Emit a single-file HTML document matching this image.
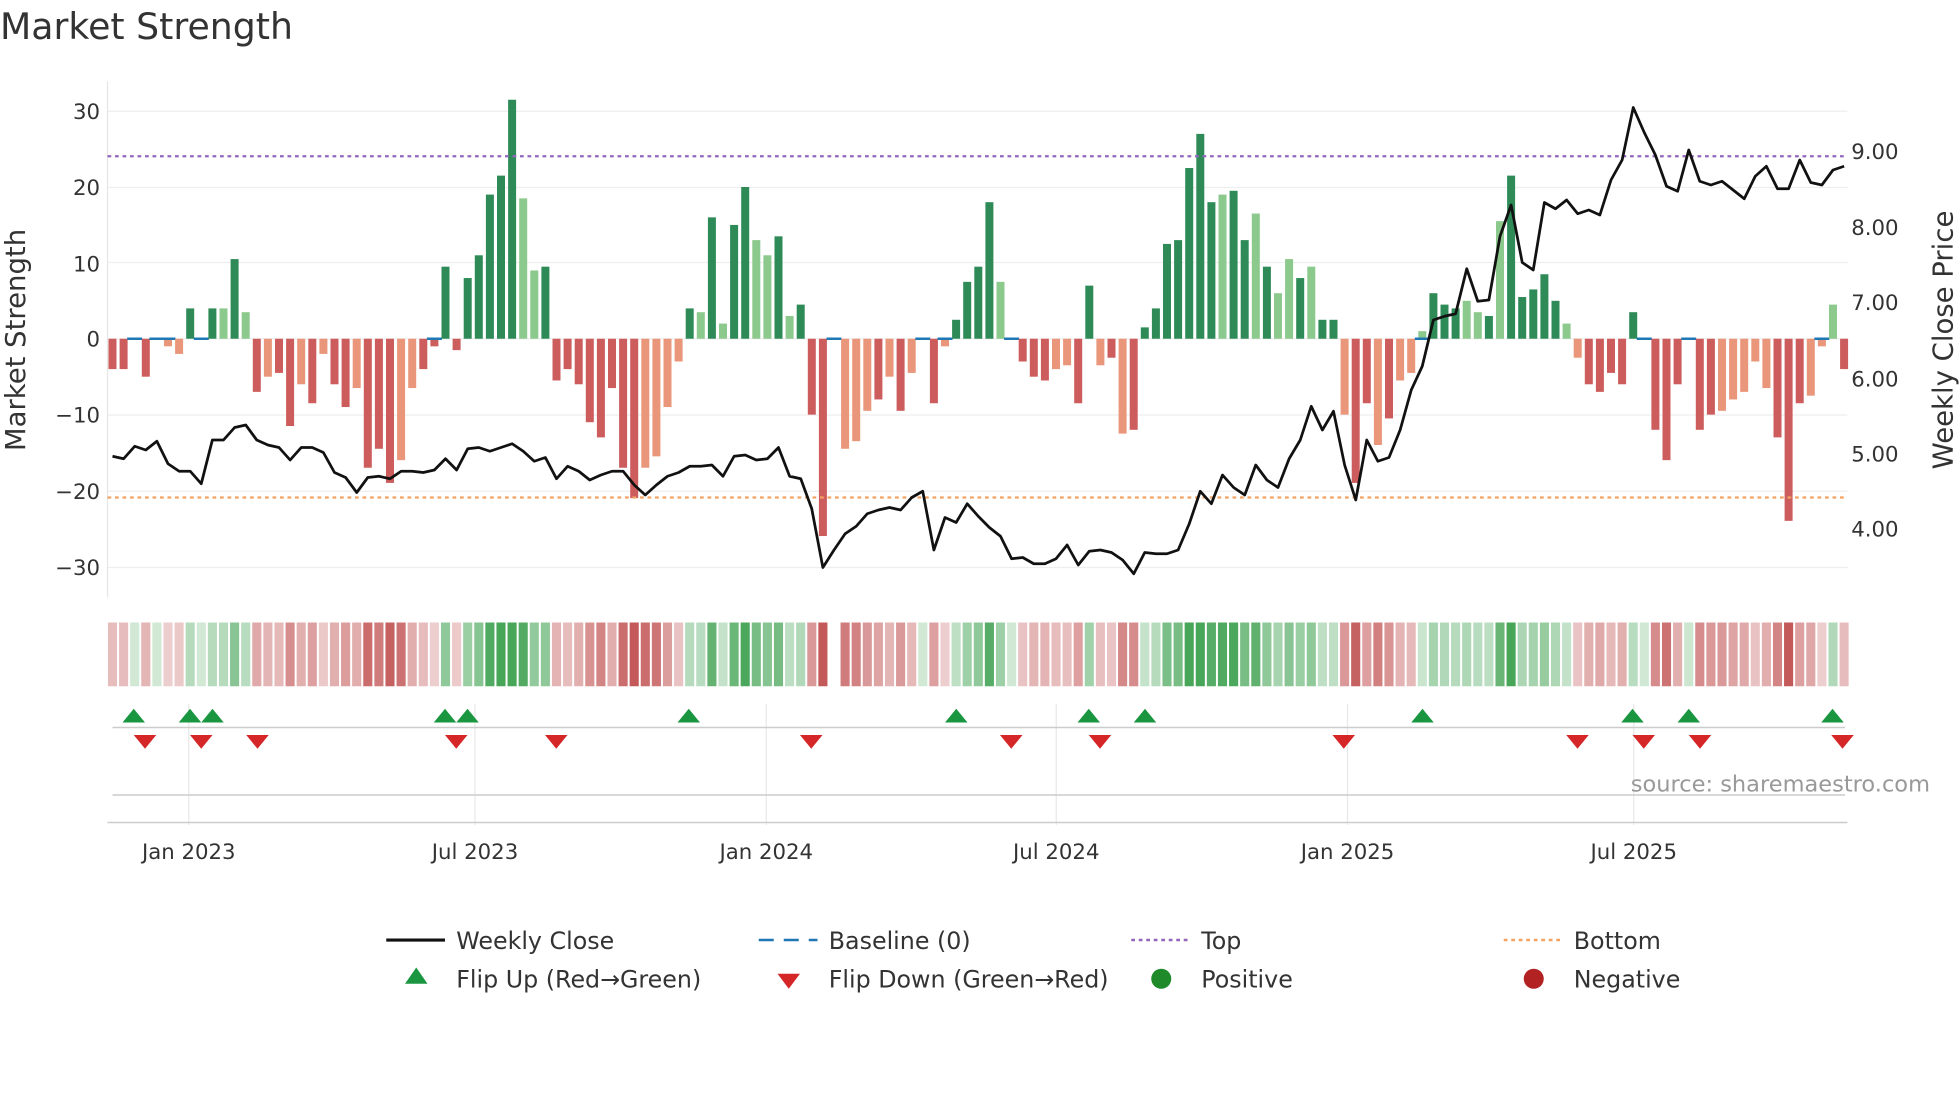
<!DOCTYPE html>
<html><head><meta charset="utf-8"><style>
html,body{margin:0;padding:0;background:#fff;}
svg{display:block;font-family:"DejaVu Sans","Liberation Sans",sans-serif;}
</style></head><body>
<svg id="c" width="1960" height="1102" viewBox="0 0 1568 881.6" xmlns="http://www.w3.org/2000/svg">
<rect width="1568" height="882" fill="#fff"/>
<text x="0" y="31" font-size="29" fill="#333">Market Strength</text>
<g id="grid"></g>
<g id="bars"></g>
<g id="strip"></g>
<g id="marks"></g>
<g id="lines"></g>
<g font-size="17" fill="#333">
<text x="80" y="95" text-anchor="end">30</text>
<text x="80" y="156" text-anchor="end">20</text>
<text x="80" y="217" text-anchor="end">10</text>
<text x="80" y="277" text-anchor="end">0</text>
<text x="80" y="338" text-anchor="end">−10</text>
<text x="80" y="399" text-anchor="end">−20</text>
<text x="80" y="460" text-anchor="end">−30</text>
<text x="1481" y="127">9.00</text>
<text x="1481" y="188">8.00</text>
<text x="1481" y="248">7.00</text>
<text x="1481" y="309">6.00</text>
<text x="1481" y="369">5.00</text>
<text x="1481" y="429">4.00</text>
<text x="151" y="687" text-anchor="middle">Jan 2023</text>
<text x="380" y="687" text-anchor="middle">Jul 2023</text>
<text x="613" y="687" text-anchor="middle">Jan 2024</text>
<text x="845" y="687" text-anchor="middle">Jul 2024</text>
<text x="1078" y="687" text-anchor="middle">Jan 2025</text>
<text x="1307" y="687" text-anchor="middle">Jul 2025</text>
</g>
<text transform="translate(20,272) rotate(-90)" font-size="22" fill="#333" text-anchor="middle">Market Strength</text>
<text transform="translate(1562,272) rotate(-90)" font-size="22" fill="#333" text-anchor="middle">Weekly Close Price</text>
<text x="1544" y="633" font-size="18" fill="#999" text-anchor="end">source: sharemaestro.com</text>
<g font-size="19" fill="#333">
<line x1="309" y1="752" x2="356" y2="752" stroke="#111" stroke-width="2.5"/>
<text x="365" y="759">Weekly Close</text>
<line x1="607" y1="752" x2="654" y2="752" stroke="#1f77b4" stroke-width="2" stroke-dasharray="12,8"/>
<text x="663" y="759">Baseline (0)</text>
<line x1="905" y1="752" x2="952" y2="752" stroke="#9467bd" stroke-width="2" stroke-dasharray="3,3"/>
<text x="961" y="759">Top</text>
<line x1="1203" y1="752" x2="1250" y2="752" stroke="#f4a261" stroke-width="2" stroke-dasharray="3,3"/>
<text x="1259" y="759">Bottom</text>
<polygon points="333,774 324,787 342,787" fill="#1a9641"/>
<text x="365" y="790">Flip Up (Red→Green)</text>
<polygon points="622,779 640,779 631,791" fill="#d62728"/>
<text x="663" y="790">Flip Down (Green→Red)</text>
<circle cx="929" cy="783" r="8" fill="#1f8a2a"/>
<text x="961" y="790">Positive</text>
<circle cx="1227" cy="783" r="8" fill="#b22222"/>
<text x="1259" y="790">Negative</text>
</g>
<script><![CDATA[
var NS="http://www.w3.org/2000/svg";
function el(p,t,a){var e=document.createElementNS(NS,t);for(var k in a)e.setAttribute(k,a[k]);document.getElementById(p).appendChild(e);return e;}
var vals=[-4,-4,0,-5,0,-1,-2,4,0,4,4,10.5,3.5,-7,-5,-4.5,-11.5,-6,-8.5,-2,-6,-9,-6.5,-17,-14.5,-19,-16,-6.5,-4,-1,9.5,-1.5,8,11,19,21.5,31.5,18.5,9,9.5,-5.5,-4,-6,-11,-13,-6.5,-17,-21,-17,-15.5,-9,-3,4,3.5,16,2,15,20,13,11,13.5,3,4.5,-10,-26,0,-14.5,-13.5,-9.5,-8,-5,-9.5,-4.5,0,-8.5,-1,2.5,7.5,9.5,18,7.5,0,-3,-5,-5.5,-4,-3.5,-8.5,7,-3.5,-2.5,-12.5,-12,1.5,4,12.5,13,22.5,27,18,19,19.5,13,16.5,9.5,6,10.5,8,9.5,2.5,2.5,-10,-19,-8.5,-14,-10.5,-5.5,-4.5,1,6,4.5,4,5,3.5,3,15.5,21.5,5.5,6.5,8.5,5,2,-2.5,-6,-7,-4.5,-6,3.5,0,-12,-16,-6,0.5,-12,-10,-9.5,-8,-7,-3,-6.5,-13,-24,-8.5,-7.5,-1,4.5,-4];
var light={};"5,6,10,12,14,17,19,22,26,27,37,38,48,49,50,51,53,55,58,59,61,66,67,68,70,72,75,80,85,86,89,91,100,103,105,106,108,111,114,116,117,118,122,123,125,131,132,142,145,146,147,148,149,153,154,155".split(",").forEach(function(i){light[i]=1;});
var X0=90,DX=8.88,Z=271,S=6.07;
[89,150,210,271,332,393,454].forEach(function(y){el("grid","line",{x1:86,x2:1478,y1:y,y2:y,stroke:"#eee","stroke-width":1});});
el("grid","line",{x1:86,x2:86,y1:65,y2:478,stroke:"#e6e6e6"});
[151,380,613,845,1078,1307].forEach(function(x){el("grid","line",{x1:x,x2:x,y1:563,y2:660,stroke:"#e8e8e8"});});
el("grid","line",{x1:90,x2:1476,y1:582,y2:582,stroke:"#ccc","stroke-width":1.2});
el("grid","line",{x1:90,x2:1476,y1:636,y2:636,stroke:"#ccc","stroke-width":1.2});
el("grid","line",{x1:86,x2:1478,y1:658,y2:658,stroke:"#ccc","stroke-width":1.2});
vals.forEach(function(v,i){
 var x=X0+i*DX, w=6.4;
 var c=v>=0?(light[i]?"#8cc98c":"#2e8b57"):(light[i]?"#e9967a":"#cd5c5c");
 if(Math.abs(v)>0.6){var h=Math.abs(v)*S;el("bars","rect",{x:x-w/2,y:v>0?Z-h:Z,width:w,height:h,fill:c});}
 if(Math.abs(v)<=1.2) el("bars","line",{x1:x-6,x2:x+6,y1:Z,y2:Z,stroke:"#1f77b4","stroke-width":2});
 var a=Math.min(0.85,0.22+Math.abs(v)/32);
 if(i!=65){
  var sc=v>=0?"rgba(40,150,60,"+a.toFixed(2)+")":"rgba(185,60,60,"+a.toFixed(2)+")";
  el("strip","rect",{x:x-DX/2+0.8,y:498,width:DX-1.6,height:51,fill:sc});
 }
});
el("lines","line",{x1:86,x2:1478,y1:125,y2:125,stroke:"#9467bd","stroke-width":1.8,"stroke-dasharray":"3,3"});
el("lines","line",{x1:86,x2:1478,y1:398,y2:398,stroke:"#f4a261","stroke-width":1.8,"stroke-dasharray":"3,3"});
var py=[365,367,357,360,353,371,377,377,387,352,352,342,340,352,356,358,368,358,358,362,378,382,394,382,381,383,377,377,378,376,367,376,359,358,361,358,355,361,369,366,383,373,377,384,380,377,377,388,396,388,381,378,373,373,372,381,365,364,368,367,358,381,383,407,454,440,427,421,411,408,406,408,398,393,440,414,418,403,413,422,429,447,446,451,451,447,436,452,441,440,442,448,459,442,443,443,440,419,393,403,380,390,396,372,384,390,367,352,325,344,329,372,400,352,369,366,344,312,293,256,253,251,215,241,240,189,164,210,216,162,167,160,171,168,172,144,128,86,106,124,149,153,120,145,148,145,152,159,141,133,151,151,128,146,148,136,133];
var d=py.map(function(y,i){return (i?"L":"M")+(X0+i*DX).toFixed(1)+","+y;}).join("");
el("lines","path",{d:d,fill:"none",stroke:"#111","stroke-width":2.2,"stroke-linejoin":"round"});
[107,152,170,356,374,551,765,871,916,1138,1306,1351,1466].forEach(function(x){el("marks","polygon",{points:(x)+",567 "+(x-9)+",578 "+(x+9)+",578",fill:"#1a9641"});});
[116,161,206,365,445,649,809,880,1075,1262,1315,1360,1474].forEach(function(x){el("marks","polygon",{points:(x-9)+",588 "+(x+9)+",588 "+x+",599",fill:"#d62728"});});
]]></script>
</svg>
</body></html>
